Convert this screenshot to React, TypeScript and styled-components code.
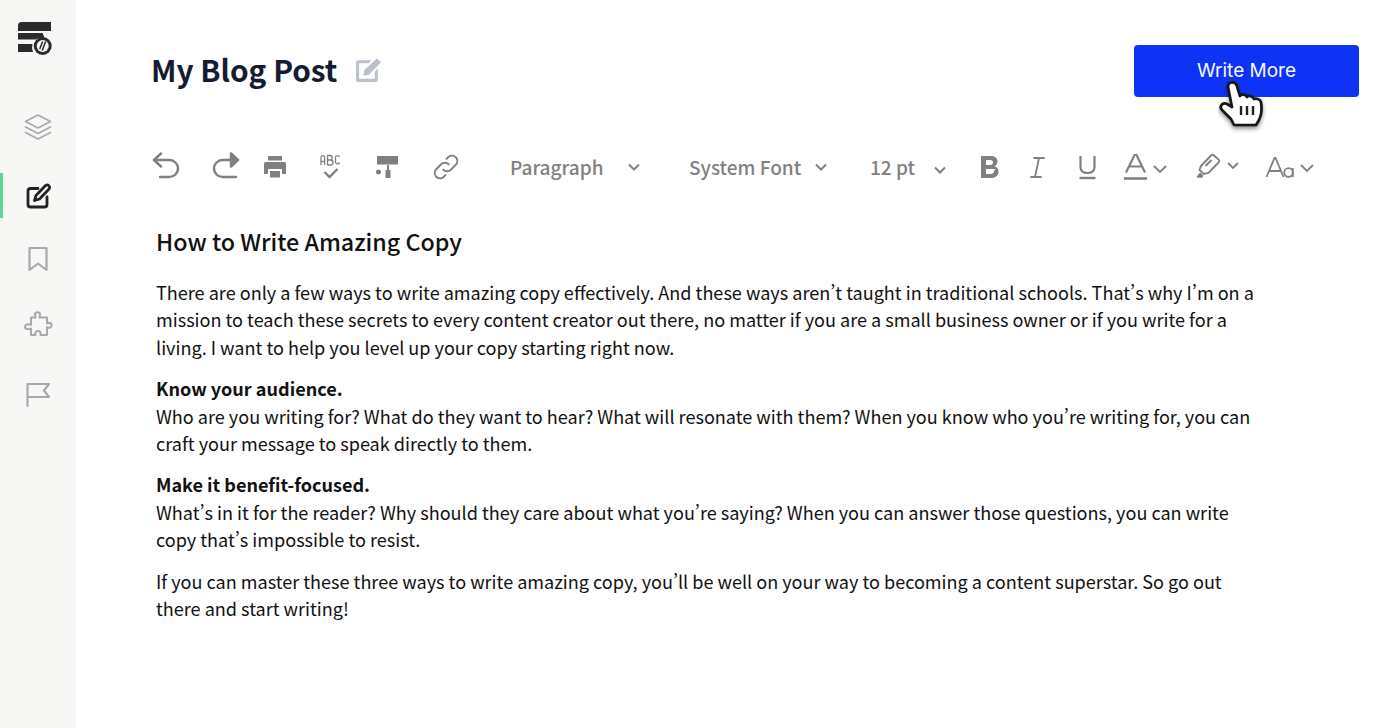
import React from "react";
import styled, { createGlobalStyle } from "styled-components";

const Global = createGlobalStyle`
  html, body { margin: 0; padding: 0; height: 100%; background: #fff; }
  #root { height: 100%; }
`;
const SANS = `"Noto Sans CJK SC", "Noto Sans", sans-serif`;

const Page = styled.div`
  display: flex; width: 1392px; height: 728px; overflow: hidden; font-family: ${SANS}; background: #fff;
  font-variant-east-asian: proportional-width;
`;
const Sidebar = styled.aside`
  width: 76px; flex: none; background: #f7f7f5; display: flex; flex-direction: column; align-items: center; padding-top: 19px; box-sizing: border-box;
`;
const NavItem = styled.div<{ $h: number; $mt?: number; $active?: boolean; $gray?: boolean }>`
  position: relative; width: 100%; height: ${p => p.$h}px; margin-top: ${p => p.$mt ?? 0}px; display: flex; align-items: center; justify-content: center;
  color: ${p => (p.$gray ? "#a9a9a9" : "#222")};
  ${p => p.$active ? `&::before { content: ""; position: absolute; left: 0; top: 0; bottom: 0; width: 3px; background: #5fd596; }` : ""}
`;
const LogoMark = styled.svg`margin-right: 6px;`;
const Main = styled.main`
  flex: 1; display: flex; flex-direction: column; padding: 45px 33px 0 75px; min-width: 0;
`;
const Header = styled.header`
  display: flex; align-items: center; justify-content: space-between; height: 52px;
`;
const TitleRow = styled.div`display: flex; align-items: center; gap: 18px; padding-bottom: 4px;`;
const Title = styled.h1`
  margin: 0; font-size: 29.800px; line-height: 50px; font-weight: 700; color: #141c33;
`;
const PrimaryButton = styled.button`
  position: relative; width: 225px; height: 52px; background: #0f33f5; color: #f4f6ff; border: 0; border-radius: 4px;
  font-family: Inter, sans-serif; font-size: 19px; padding: 0 0 2px;
`;
const Cursor = styled.span`
  position: absolute; left: 84px; top: 33px; line-height: 0;
`;
const Toolbar = styled.div`
  display: flex; align-items: center; height: 40px; margin-top: 50px; color: #808080;
`;
const Tool = styled.div<{ $w: number }>`
  width: ${p => p.$w}px; flex: none; display: flex; align-items: center; color: #808080;
`;
const Select = styled.div<{ $w: number; $gap: number }>`
  width: ${p => p.$w}px; flex: none; display: flex; align-items: center; gap: ${p => p.$gap}px;
  font-size: 19px; line-height: 30px; font-weight: 500; color: #808080;
`;
const ChevronIcon = styled.svg<{ $dy?: number }>`
  transform: translateY(${p => p.$dy ?? 0}px);
`;
const Doc = styled.article`
  margin-top: 37px; padding-left: 5px; color: #111; font-size: 18.070px; line-height: 27.400px; width: 1105px;
`;
const DocTitle = styled.h2`
  margin: 0 0 21px; font-size: 23.250px; line-height: 34px; font-weight: 500; color: #111;
`;
const Para = styled.p`margin: 0 0 14px;`;
const Strong = styled.strong`font-weight: 700;`;

const Chevron: React.FC<{ dy?: number }> = ({ dy }) => (
  <ChevronIcon $dy={dy} width="14" height="9" viewBox="0 0 14 9" fill="none" stroke="currentColor" strokeWidth="2"><path d="M2 1.500l5 5 5-5" /></ChevronIcon>
);
const Stroke: React.FC<{ w?: number; h?: number; vb?: string; sw?: number; children: React.ReactNode }> = ({ w = 28, h = 28, vb = "0 0 28 28", sw = 2.4, children }) => (
  <svg width={w} height={h} viewBox={vb} fill="none" stroke="currentColor" strokeWidth={sw} strokeLinejoin="round" strokeLinecap="round">{children}</svg>
);

const Logo = () => (
  <LogoMark width="36" height="36" viewBox="0 0 36 36" fill="#2b2b2b">
    <path d="M1 5C1 3.500 2.500 2 4.500 2H34v9H1z" />
    <path d="M1 13h24.500l2 5a12 12 0 0 0-9 1.500H1z" />
    <path d="M1 24h14.500a12 12 0 0 0 .5 8H1z" />
    <circle cx="25.700" cy="26" r="9" />
    <circle cx="25.700" cy="26" r="6" fill="#f7f7f5" />
    <path d="M28.700 21.500L25.200 30.500M25.700 21.500L22.700 29" stroke="#2b2b2b" strokeWidth="1.500" fill="none" />
  </LogoMark>
);
const Hand = () => (
  <svg width="51" height="58" viewBox="0 0 51 58">
    <defs><filter id="hs" x="-30%" y="-30%" width="160%" height="160%"><feDropShadow dx="0" dy="2.500" stdDeviation="2" floodColor="#000" floodOpacity=".45" /></filter></defs>
    <path filter="url(#hs)" d="M10 9c0-6 8-6 9-.5l3 9.500c1-2 6-2 7 1 1-2 6-1 7 2 2-1 6 0 7 3 1 6 1 12-2 18l-3 5H16l-3-6-9-9c-3-3 0-8 5-6l5 3z" fill="#fff" stroke="#141414" strokeWidth="2.700" strokeLinejoin="round" />
    <path d="M23 28v9M29 28v9M35 28v9" stroke="#222" strokeWidth="2.400" fill="none" />
  </svg>
);

export default function App() {
  return (
    <Page>
      <Global />
      <Sidebar>
        <NavItem $h={38}><Logo /></NavItem>
        <NavItem $h={50} $mt={45} $gray>
          <Stroke w={30} h={30} vb="0 0 30 30" sw={1.7}>
            <path d="M15 3L27.500 9.500 15 16 2.500 9.500z" /><path d="M2.500 15L15 21.500 27.500 15" /><path d="M2.500 20.500L15 27l12.500-6.500" />
          </Stroke>
        </NavItem>
        <NavItem $h={45} $mt={21} $active>
          <Stroke sw={2.800}>
            <path d="M23 15v7.500a2.500 2.500 0 0 1-2.500 2.500H6.500A2.500 2.500 0 0 1 4 22.500V9a2.500 2.500 0 0 1 2.500-2.500H14" />
            <path d="M21.500 3.500a2.500 2.500 0 0 1 3.500 3.500L15.500 17l-5 1.500 1.500-5z" />
          </Stroke>
        </NavItem>
        <NavItem $h={50} $mt={16} $gray>
          <Stroke sw={2.2}><path d="M5.500 3h17v22l-8.500-6.500L5.500 25z" /></Stroke>
        </NavItem>
        <NavItem $h={50} $mt={16} $gray>
          <Stroke w={30} h={30} vb="0 0 30 30" sw={2}>
            <path d="M12 4.500c0-3 5-3 5 0 0 1-.5 1.500-.5 3H24v6c1.500-1 5-1 4.500 2s-3 2.500-4.500 1.500V25h-6.500c.5-2 0-4-2.500-4s-3 2-2.500 4H8v-6.500c-2 1-6 1-6-1.500s4-3.500 6-2V7.500h4.500c0-1-.5-1.500-.5-3z" />
          </Stroke>
        </NavItem>
        <NavItem $h={50} $mt={19} $gray>
          <Stroke sw={2.2}><path d="M3.500 26V4H25l-5 6.500 5 6.500H3.500" /></Stroke>
        </NavItem>
      </Sidebar>
      <Main>
        <Header>
          <TitleRow>
            <Title>My Blog Post</Title>
            <svg width="27" height="25" viewBox="0 0 26 24" fill="#bcc0ca">
              <path d="M3 3h13l-3 3H4v15h15v-7l3-3v11a2 2 0 0 1-2 2H3a2 2 0 0 1-2-2V5a2 2 0 0 1 2-2z" />
              <path d="M21 1.500l4 3.500L13.500 17 8 18l1-5.500z" />
            </svg>
          </TitleRow>
          <PrimaryButton>Write More<Cursor><Hand /></Cursor></PrimaryButton>
        </Header>
        <Toolbar>
          <Tool $w={60}>
            <Stroke w={30} h={30} vb="0 0 30 30"><path d="M10 1.500L3 8l7 6.500" /><path d="M3 8h15.500a8.500 8.500 0 0 1 0 17H9" /></Stroke>
          </Tool>
          <Tool $w={52}>
            <Stroke w={30} h={30} vb="0 0 30 30"><path d="M20 1.500L27 8l-7 6.500z" fill="#808080" /><path d="M27 8H11.500a8.500 8.500 0 0 0 0 17H25" /></Stroke>
          </Tool>
          <Tool $w={56}>
            <svg width="24" height="24" viewBox="0 0 24 24" fill="currentColor">
              <rect x="5" y="1" width="14" height="4.500" /><path d="M2.500 7h19A1.500 1.500 0 0 1 23 8.500V19h-4v-5H5v5H1V8.500A1.500 1.500 0 0 1 2.500 7z" /><rect x="7" y="16" width="10" height="6.500" />
            </svg>
          </Tool>
          <Tool $w={56}>
            <svg width="24" height="26" viewBox="0 0 24 26" fill="none" stroke="currentColor">
              <path d="M2 11V3.500a1.800 1.800 0 0 1 3.600 0V11M2 7.500h3.600M8.500 11V1.500h2.500a2 2 0 0 1 0 4.500H8.500h3a2.200 2.200 0 0 1 0 5h-3M20.500 3c-.5-2-4-2-4 .5v4.500c0 2.500 3.500 2.500 4 .5" strokeWidth="1.300" />
              <path d="M5.500 18l5 5 8-8" strokeWidth="2.400" />
            </svg>
          </Tool>
          <Tool $w={57}>
            <svg width="24" height="26" viewBox="0 0 24 26" fill="currentColor">
              <rect x="2" y="2" width="21" height="8.500" /><rect x="12" y="11" width="2" height="5" /><rect x="10.500" y="16" width="5" height="8" /><circle cx="3.500" cy="18" r="2.500" />
            </svg>
          </Tool>
          <Tool $w={78}>
            <Stroke w={28} h={28} vb="0 0 26 26" sw={1.800}>
              <path d="M10.500 15.500a5 5 0 0 0 7 0l5-5a5 5 0 0 0-7-7l-2 2" /><path d="M15.500 10.500a5 5 0 0 0-7 0l-5 5a5 5 0 0 0 7 7l2-2" />
            </Stroke>
          </Tool>
          <Select $w={179} $gap={24}>Paragraph <Chevron /></Select>
          <Select $w={181} $gap={13}>System Font <Chevron /></Select>
          <Select $w={110} $gap={18}>12 pt <Chevron dy={3} /></Select>
          <Tool $w={45}>
            <svg width="24" height="28" viewBox="2 0 24 28" fill="currentColor"><path d="M3 3h9.500c4.500 0 7 2 7 5.500 0 2.200-1.200 4-3 4.700 2.500.6 4 2.600 4 5.300 0 4-3 6.500-7.500 6.500H3zm5 4v5h4c2 0 3-1 3-2.500S14 7 12 7zm0 9v5h4.500c2 0 3.500-1 3.500-2.500S18.500 16 16.500 16z" /></svg>
          </Tool>
          <Tool $w={52}>
            <Stroke w={24} h={26} vb="0 0 24 26" sw={1.800}><path d="M9 4h10M6 23h10M14 4l-4 19" /></Stroke>
          </Tool>
          <Tool $w={46}>
            <svg width="22" height="26" viewBox="0 0 22 26" fill="none" stroke="currentColor"><path d="M3.500 2v11c0 4 3 6 7 6s7-2 7-6V2" strokeWidth="2.200" /><path d="M2.500 24h16" strokeWidth="2.400" /></svg>
          </Tool>
          <Tool $w={72}>
            <svg width="46" height="28" viewBox="0 0 46 28" fill="none" stroke="currentColor"><path d="M3 19.500L11.500 2h2L22 19.500M6 13.500h13" strokeWidth="2.200" /><path d="M1 25.500h23" strokeWidth="2.600" /><path d="M31 13l6 6 6-6" strokeWidth="1.800" /></svg>
          </Tool>
          <Tool $w={70}>
            <svg width="46" height="28" viewBox="0 0 46 28" fill="none" stroke="currentColor" strokeWidth="1.900">
              <path d="M6 13L16 2.500a2 2 0 0 1 3 0l4.500 4a2 2 0 0 1 0 3L13.500 20l-5 1-4-4z" />
              <path d="M10.500 13l6-6" />
              <path d="M2 24l3-4 3 3-1.500 1.500z" fill="currentColor" strokeWidth="1" />
              <path d="M33 10l5 5 5-5" />
            </svg>
          </Tool>
          <Tool $w={50}>
            <svg width="50" height="28" viewBox="0 0 50 28" fill="none" stroke="currentColor" strokeWidth="1.800"><path d="M1.500 24L9.500 5h1l8 19M4.500 18h11" /><circle cx="23.500" cy="19.500" r="4.300" /><path d="M27.800 15v9" /><path d="M36 12l6 6 6-6" /></svg>
          </Tool>
        </Toolbar>
        <Doc>
          <DocTitle>How to Write Amazing Copy</DocTitle>
          <Para>There are only a few ways to write amazing copy effectively. And these ways aren’t taught in traditional schools. That’s why I’m on a mission to teach these secrets to every content creator out there, no matter if you are a small business owner or if you write for a living. I want to help you level up your copy starting right now.</Para>
          <Para><Strong>Know your audience.</Strong><br />Who are you writing for? What do they want to hear? What will resonate with them? When you know who you’re writing for, you can craft your message to speak directly to them.</Para>
          <Para><Strong>Make it benefit-focused.</Strong><br />What’s in it for the reader? Why should they care about what you’re saying? When you can answer those questions, you can write copy that’s impossible to resist.</Para>
          <Para>If you can master these three ways to write amazing copy, you’ll be well on your way to becoming a content superstar. So go out there and start writing!</Para>
        </Doc>
      </Main>
    </Page>
  );
}
